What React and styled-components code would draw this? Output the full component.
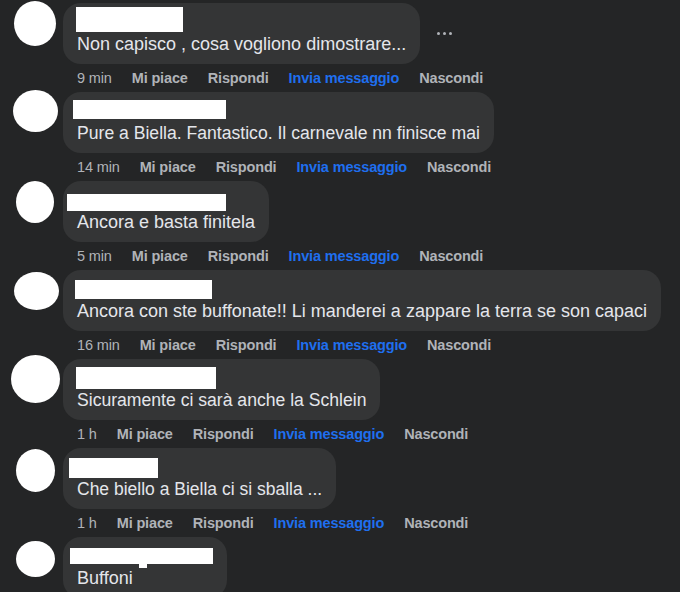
import React from 'react';
import styled, { createGlobalStyle } from 'styled-components';

const GlobalStyle = createGlobalStyle`
  html, body {
    margin: 0;
    padding: 0;
    background: #242526;
    overflow: hidden;
  }
  body {
    font-family: "Liberation Sans", Arial, sans-serif;
  }
`;

const Page = styled.div`
  width: 680px;
  height: 592px;
  padding-top: 3px;
  box-sizing: border-box;
  background: #242526;
  display: flex;
  flex-direction: column;
  overflow: hidden;
`;

const Comment = styled.div`
  display: flex;
  align-items: flex-start;
`;

const AvatarCol = styled.div`
  width: 63px;
  flex-shrink: 0;
`;

const Avatar = styled.div`
  margin-left: ${p => p.$x}px;
  margin-top: ${p => p.$y}px;
  width: ${p => p.$w}px;
  height: ${p => p.$h}px;
  border-radius: 50%;
  background: #ffffff;
`;

const Body = styled.div`
  display: flex;
  flex-direction: column;
  align-items: flex-start;
`;

const BubbleRow = styled.div`
  display: flex;
  align-items: center;
  gap: 17px;
`;

const Bubble = styled.div`
  display: inline-flex;
  flex-direction: column;
  align-items: flex-start;
  box-sizing: border-box;
  height: 61px;
  padding: 0 14px 9px;
  border-radius: 18px;
  background: #343536;
`;

const NameBox = styled.div`
  position: relative;
  margin-top: ${p => p.$top}px;
  margin-left: ${p => p.$x}px;
  width: ${p => p.$w}px;
  height: ${p => p.$h}px;
  background: #ffffff;

  ${p => p.$notch && `
    &::after {
      content: '';
      position: absolute;
      left: ${p.$notch}px;
      top: 100%;
      width: 8px;
      height: 4px;
      background: #ffffff;
    }
  `}
`;

const Text = styled.div`
  margin-top: auto;
  font-size: ${p => p.$size}px;
  line-height: 22px;
  color: #e4e6eb;
  white-space: nowrap;
`;

const Dots = styled.div`
  display: flex;
  gap: 3px;
  span {
    width: 3px;
    height: 3px;
    border-radius: 50%;
    background: #b0b3b8;
  }
`;

const Actions = styled.div`
  display: flex;
  gap: 20px;
  margin: 4px 0 4px 14px;
  font-size: 14.5px;
  line-height: 20px;
  letter-spacing: -0.15px;
  white-space: nowrap;
`;

const Time = styled.span`
  color: #b0b3b8;
`;

const Action = styled.span`
  font-weight: bold;
  color: ${p => (p.$blue ? '#1f6fef' : '#b0b3b8')};
`;

const comments = [
  {
    avatar: { x: 14, y: -2, w: 42, h: 45 },
    name: { top: 4, x: -1, w: 107, h: 25 },
    text: 'Non capisco , cosa vogliono dimostrare...',
    size: 18,
    time: '9 min',
    dots: true,
  },
  {
    avatar: { x: 13, y: -2, w: 45, h: 42 },
    name: { top: 8, x: -4, w: 153, h: 19 },
    text: 'Pure a Biella. Fantastico. Il carnevale nn finisce mai',
    size: 17.6,
    time: '14 min',
  },
  {
    avatar: { x: 16, y: 0, w: 38, h: 42 },
    name: { top: 13, x: -10, w: 159, h: 18 },
    text: 'Ancora e basta finitela',
    size: 18,
    time: '5 min',
  },
  {
    avatar: { x: 14, y: 2, w: 45, h: 38 },
    name: { top: 10, x: -2, w: 137, h: 19 },
    text: 'Ancora con ste buffonate!! Li manderei a zappare la terra se son capaci',
    size: 18,
    time: '16 min',
  },
  {
    avatar: { x: 11, y: -4, w: 49, h: 48 },
    name: { top: 8, x: -1, w: 140, h: 23 },
    text: 'Sicuramente ci sarà anche la Schlein',
    size: 17.6,
    time: '1 h',
  },
  {
    avatar: { x: 16, y: 1, w: 39, h: 43 },
    name: { top: 10, x: -8, w: 89, h: 20 },
    text: 'Che biello a Biella ci si sballa ...',
    size: 17.5,
    time: '1 h',
  },
  {
    avatar: { x: 16, y: 4, w: 39, h: 36 },
    name: { top: 11, x: -7, w: 143, h: 16, notch: 69 },
    text: 'Buffoni',
    size: 18,
  },
];

const App = () => (
  <>
    <GlobalStyle />
    <Page>
      {comments.map((c, i) => (
        <Comment key={i}>
          <AvatarCol>
            <Avatar $x={c.avatar.x} $y={c.avatar.y} $w={c.avatar.w} $h={c.avatar.h} />
          </AvatarCol>
          <Body>
            <BubbleRow>
              <Bubble>
                <NameBox
                  $top={c.name.top}
                  $x={c.name.x}
                  $w={c.name.w}
                  $h={c.name.h}
                  $notch={c.name.notch}
                />
                <Text $size={c.size}>{c.text}</Text>
              </Bubble>
              {c.dots && (
                <Dots>
                  <span />
                  <span />
                  <span />
                </Dots>
              )}
            </BubbleRow>
            {c.time && (
              <Actions>
                <Time>{c.time}</Time>
                <Action>Mi piace</Action>
                <Action>Rispondi</Action>
                <Action $blue>Invia messaggio</Action>
                <Action>Nascondi</Action>
              </Actions>
            )}
          </Body>
        </Comment>
      ))}
    </Page>
  </>
);

export default App;
